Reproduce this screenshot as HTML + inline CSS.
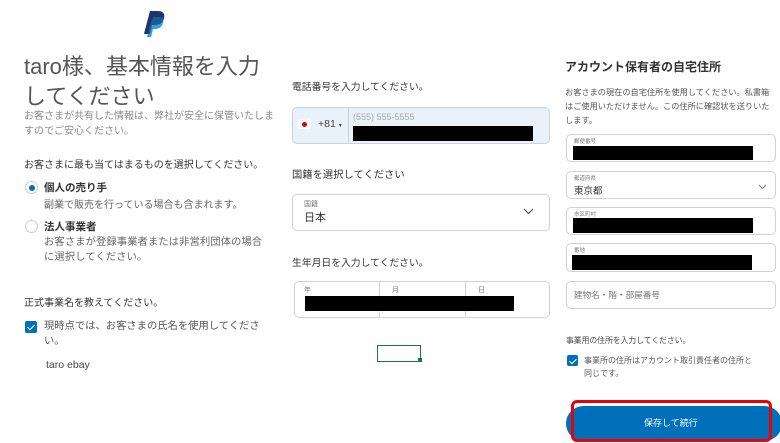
<!DOCTYPE html>
<html><head><meta charset="utf-8"><style>
*{margin:0;padding:0;box-sizing:border-box}
body{width:780px;height:443px;background:#fff;position:relative;overflow:hidden;font-family:"Liberation Sans","Noto Sans CJK JP",sans-serif;color:#2c2e2f}
.a{position:absolute;white-space:nowrap}
.box{position:absolute;border:1px solid #cfd3d6;border-radius:5px;background:#fff}
.blk{position:absolute;background:#000}
.lab{position:absolute;font-size:7px;color:#777}
.chk{position:absolute;width:12px;height:12px;background:#0070ba;border-radius:2px}
.chk:after{content:"";position:absolute;left:4px;top:1.5px;width:3px;height:6px;border:solid #fff;border-width:0 1.5px 1.5px 0;transform:rotate(45deg)}
</style></head><body>
<svg class="a" style="left:141px;top:10px" width="24" height="28" viewBox="0 0 24 28">
<path d="M9 1h8c5 0 7 3 6 7-1 5-5 7-9 7h-3l-2 9H3z" fill="#253b80"/>
<path d="M12 7h6c4 0 5 2 4 6-1 4-4 6-8 6h-2l-2 8H6l3-11z" fill="#179bd7" opacity=".9"/>
<path d="M9 1h8c5 0 7 3 6 7-1 5-5 7-9 7h-3l-2 9H3z" fill="#222d65" opacity=".55"/>
</svg>
<div class="a" style="left:24px;top:52px;font-size:22px;color:#555;line-height:30px">taro様、基本情報を入力<br>してください</div>
<div class="a" style="left:24px;top:109px;font-size:10px;color:#8a8a8a;line-height:15px">お客さまが共有した情報は、弊社が安全に保管いたしま<br>すのでご安心ください。</div>
<div class="a" style="left:24px;top:156px;font-size:10px;color:#333">お客さまに最も当てはまるものを選択してください。</div>
<div class="a" style="left:25px;top:181px;width:13px;height:13px;border-radius:50%;border:1px solid #ccc;background:#fff"><div style="position:absolute;left:2.5px;top:2.5px;width:6px;height:6px;border-radius:50%;background:#0070ba"></div></div>
<div class="a" style="left:44px;top:180px;font-size:10.5px;font-weight:bold;color:#333">個人の売り手</div>
<div class="a" style="left:44px;top:196px;font-size:10px;color:#666">副業で販売を行っている場合も含まれます。</div>
<div class="a" style="left:25px;top:220px;width:13px;height:13px;border-radius:50%;border:1px solid #ccc"></div>
<div class="a" style="left:44px;top:219px;font-size:10.5px;font-weight:bold;color:#333">法人事業者</div>
<div class="a" style="left:44px;top:235px;font-size:10.4px;color:#666;line-height:15px">お客さまが登録事業者または非営利団体の場合<br>に選択してください。</div>
<div class="a" style="left:24px;top:294px;font-size:10px;color:#333">正式事業名を教えてください。</div>
<div class="chk" style="left:25px;top:321px"></div>
<div class="a" style="left:44px;top:319px;font-size:10.3px;color:#555;line-height:15px">現時点では、お客さまの氏名を使用してくださ<br>い。</div>
<div class="a" style="left:46px;top:359px;font-size:10.5px;color:#444">taro ebay</div>

<div class="a" style="left:292px;top:79px;font-size:9.8px;color:#333">電話番号を入力してください。</div>
<div class="box" style="left:292px;top:107px;width:258px;height:37px;background:#e9f1fb;border-color:#c8d3de"></div>
<div class="a" style="left:348px;top:108px;width:1px;height:35px;background:#c8d3de"></div>
<div class="a" style="left:298px;top:119px;width:13px;height:10px;background:#fff"><div style="position:absolute;left:4px;top:2.5px;width:5px;height:5px;border-radius:50%;background:#d00"></div></div>
<div class="a" style="left:318px;top:118px;font-size:10.5px;color:#444">+81 <span style="font-size:6px">▾</span></div>
<div class="a" style="left:353px;top:112px;font-size:9px;color:#aaa">(555) 555-5555</div>
<div class="blk" style="left:353px;top:126px;width:180px;height:15px"></div>
<div class="a" style="left:292px;top:166px;font-size:10.3px;color:#333">国籍を選択してください</div>
<div class="box" style="left:292px;top:194px;width:258px;height:37px"></div>
<div class="lab" style="left:304px;top:199px">国籍</div>
<div class="a" style="left:304px;top:209px;font-size:11px;color:#333">日本</div>
<svg class="a" style="left:523px;top:208px" width="11" height="7"><path d="M1 1l4.5 4.5L10 1" stroke="#555" stroke-width="1.2" fill="none"/></svg>
<div class="a" style="left:292px;top:255px;font-size:9.8px;color:#333">生年月日を入力してください。</div>
<div class="box" style="left:294px;top:281px;width:256px;height:37px"></div>
<div class="a" style="left:379px;top:282px;width:1px;height:35px;background:#cfd3d6"></div>
<div class="a" style="left:465px;top:282px;width:1px;height:35px;background:#cfd3d6"></div>
<div class="lab" style="left:304px;top:285px">年</div>
<div class="lab" style="left:392px;top:285px">月</div>
<div class="lab" style="left:478px;top:285px">日</div>
<div class="blk" style="left:305px;top:296px;width:209px;height:15px"></div>
<div class="a" style="left:377px;top:345px;width:44px;height:17px;border:1.5px solid #217346"></div>
<div class="a" style="left:418px;top:358px;width:4px;height:4px;background:#217346"></div>

<div class="a" style="left:565px;top:58px;font-size:12px;color:#333;font-weight:bold">アカウント保有者の自宅住所</div>
<div class="a" style="left:565px;top:86px;font-size:8.2px;color:#555;line-height:14px">お客さまの現在の自宅住所を使用してください。私書箱<br>はご使用いただけません。この住所に確認状を送りいた<br>します。</div>
<div class="box" style="left:566px;top:134px;width:210px;height:28px"></div>
<div class="lab" style="left:574px;top:137px;font-size:5.5px">郵便番号</div>
<div class="blk" style="left:573px;top:146px;width:180px;height:14px"></div>
<div class="box" style="left:566px;top:171px;width:210px;height:28px"></div>
<div class="lab" style="left:574px;top:174px;font-size:5.5px">都道府県</div>
<div class="a" style="left:574px;top:183px;font-size:9.5px;color:#333">東京都</div>
<svg class="a" style="left:758px;top:184px" width="9" height="6"><path d="M1 1l3.5 3.5L8 1" stroke="#777" stroke-width="1" fill="none"/></svg>
<div class="box" style="left:566px;top:207px;width:210px;height:28px"></div>
<div class="lab" style="left:574px;top:210px;font-size:5.5px">市区町村</div>
<div class="blk" style="left:573px;top:218px;width:180px;height:15px"></div>
<div class="box" style="left:566px;top:243px;width:210px;height:29px"></div>
<div class="lab" style="left:574px;top:246px;font-size:5.5px">番地</div>
<div class="blk" style="left:572px;top:255px;width:180px;height:15px"></div>
<div class="box" style="left:566px;top:281px;width:210px;height:28px"></div>
<div class="a" style="left:574px;top:289px;font-size:8.6px;color:#777">建物名・階・部屋番号</div>
<div class="a" style="left:566px;top:335px;font-size:7.8px;color:#444">事業用の住所を入力してください。</div>
<div class="chk" style="left:567px;top:355px;width:11px;height:11px"></div>
<div class="a" style="left:584px;top:354px;font-size:8px;color:#555;line-height:13px">事業所の住所はアカウント取引責任者の住所と<br>同じです。</div>
<div class="a" style="left:566px;top:406px;width:216px;height:35px;border-radius:18px;background:#0070ba"></div>
<div class="a" style="left:571px;top:400px;width:201px;height:42px;border:3px solid #e8000b;border-radius:6px"></div>
<div class="a" style="left:644px;top:416px;font-size:9px;color:#fff">保存して続行</div>
</body></html>
